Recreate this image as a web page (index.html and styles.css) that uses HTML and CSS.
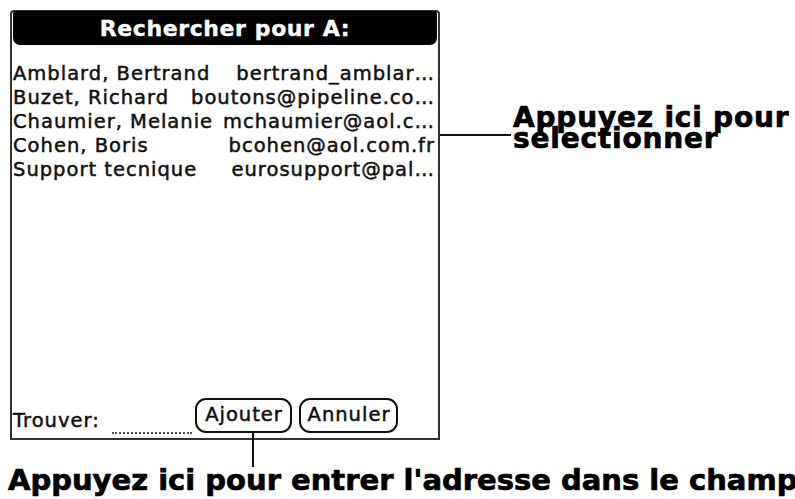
FILE: index.html
```html
<!DOCTYPE html>
<html lang="fr">
<head>
<meta charset="utf-8">
<title>Rechercher pour A</title>
<link rel="stylesheet" href="styles.css">
</head>
<body>
<div class="page">
  <div class="top">
    <div class="dialog">
      <div class="title">Rechercher pour A:</div>
      <ul class="list">
        <li class="row"><span class="name">Amblard, Bertrand</span><span class="mail">bertrand_amblar…</span></li>
        <li class="row"><span class="name">Buzet, Richard</span><span class="mail">boutons@pipeline.co…</span></li>
        <li class="row"><span class="name">Chaumier, Melanie</span><span class="mail">mchaumier@aol.c…</span></li>
        <li class="row"><span class="name">Cohen, Boris</span><span class="mail">bcohen@aol.com.fr</span></li>
        <li class="row"><span class="name">Support tecnique</span><span class="mail">eurosupport@pal…</span></li>
      </ul>
      <div class="footer">
        <span class="find">Trouver:</span>
        <span class="field"></span>
        <button class="btn btn-add">Ajouter</button>
        <button class="btn btn-cancel">Annuler</button>
      </div>
    </div>
    <div class="callout-right">Appuyez ici pour<br>sélectionner</div>
  </div>
  <div class="callout-bottom">Appuyez ici pour entrer l'adresse dans le champ</div>
</div>
</body>
</html>
```
FILE: styles.css
```css
html, body {
  margin: 0;
  padding: 0;
  background: #ffffff;
}

.page {
  width: 795px;
  height: 499px;
  overflow: hidden;
  padding-top: 10px;
  box-sizing: border-box;
}

.top {
  display: flex;
  align-items: flex-start;
}

.dialog {
  margin-left: 10px;
  width: 430px;
  height: 430px;
  box-sizing: border-box;
  border: 2px solid #333;
  border-radius: 4px 4px 0 0;
  display: flex;
  flex-direction: column;
  font-family: "DejaVu Sans", sans-serif;
  font-size: 19.5px;
  letter-spacing: 1px;
  color: #111;
  -webkit-text-stroke: 0.5px #111;
}

.title {
  height: 34px;
  margin: -1px 1px 0;
  background: #000;
  color: #fff;
  -webkit-text-stroke: 0.4px #fff;
  border-radius: 3px 3px 7px 7px;
  font-weight: bold;
  font-size: 22px;
  letter-spacing: 0.6px;
  display: flex;
  align-items: center;
  justify-content: center;
  padding-top: 1px;
  box-sizing: border-box;
}

.list {
  list-style: none;
  margin: 0;
  padding: 17px 3px 0 1px;
  flex: 1;
}

.row {
  display: flex;
  justify-content: space-between;
  line-height: 24px;
  white-space: nowrap;
}

.footer {
  display: flex;
  align-items: flex-end;
  padding: 0 0 5px 1px;
}

.find {
  width: 93px;
  line-height: 24px;
  white-space: nowrap;
}

.field {
  width: 80px;
  height: 2px;
  margin: 0 3px -1px 6px;
  border-bottom: 2px dotted #555;
}

.btn {
  position: relative;
  height: 35px;
  box-sizing: border-box;
  border: 2px solid #111;
  border-radius: 11px;
  background: #fff;
  font: inherit;
  color: inherit;
  letter-spacing: 1px;
  padding: 0 0 2px 1px;
  margin: 0;
}

.btn-add {
  width: 97px;
}

.btn-cancel {
  width: 99px;
  margin-left: 7px;
}

.btn-add::after {
  content: "";
  position: absolute;
  left: 55px;
  top: 100%;
  width: 2px;
  height: 36px;
  background: #111;
}

.callout-right,
.callout-bottom {
  font-family: "DejaVu Sans", sans-serif;
  font-weight: bold;
  color: #000;
  -webkit-text-stroke: 0.7px #000;
  white-space: nowrap;
}

.callout-right {
  position: relative;
  margin: 97px 0 0 73px;
  font-size: 28px;
  letter-spacing: 0.8px;
  line-height: 21px;
}

.callout-right::before {
  content: "";
  position: absolute;
  left: -73px;
  top: 27px;
  width: 71px;
  height: 2px;
  background: #111;
}

.callout-bottom {
  margin: 25px 0 0 8px;
  font-size: 29px;
  line-height: 30px;
}
```
